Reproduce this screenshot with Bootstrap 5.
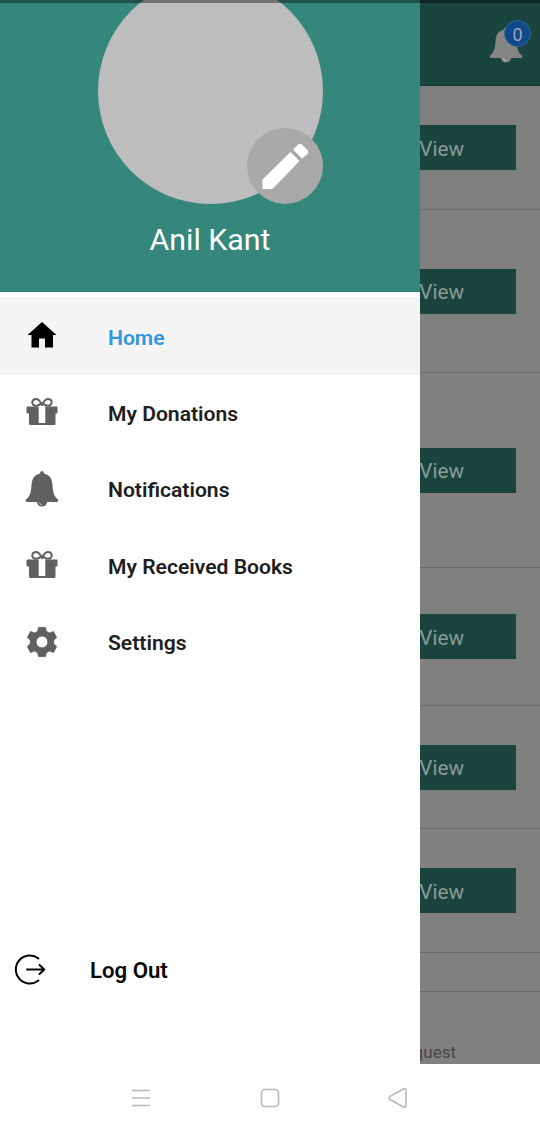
<!DOCTYPE html>
<html lang="en">
<head>
<meta charset="utf-8">
<meta name="viewport" content="width=device-width, initial-scale=1">
<title>Menu</title>
<link href="https://cdn.jsdelivr.net/npm/bootstrap@5.3.0/dist/css/bootstrap.min.css" rel="stylesheet">
<style>
body{font-family:Roboto,"Liberation Sans",sans-serif;height:1131px;background:#fefefe;overflow:hidden}
.status-strip{height:3px;background:rgba(0,0,0,.4);z-index:5}
.screen{height:1064px}
.drawer{width:420px;background:#fefefe}
.drawer-head{height:292px;background:#35877c;border-bottom:1px solid #2b776d;margin-bottom:5px}
.avatar{width:225px;height:226px;margin-top:-22px;background:#bdbdbd}
.edit{width:76px;height:76px;background:#a9a9a9;right:0;bottom:0}
.user-name{font-size:30.300px;line-height:36px;margin-top:18px}
.menu-item{height:76.500px;font-size:21.100px;font-weight:600;color:#1e1e1e}
.menu-item span{padding-top:1px}
.menu-item svg{width:36px;height:40px;margin:0 48px 2px 24px;fill:#606060;flex:none}
.menu-item.current{height:78px;background:#f4f4f4;color:#2f97dd}
.menu-item.current span{padding-top:3px}
.menu-item.current svg{fill:#000}
.logout{margin-top:auto;margin-bottom:73px;height:42px;font-size:22.200px;font-weight:600;color:#080808}
.logout span{margin-left:-6px;padding-top:2px}
.behind{background:#808080}
.topbar{height:86px;background:#1a443e;border-bottom:1px solid #153832}
.bell-box{right:15px;top:25px;width:38px;height:40px}
.count{width:27px;height:27px;right:-6px;top:-5px;background:#10498a;border:1px solid #32659a;color:#98a8b8;font-size:18px;padding-top:1px}
.request{border-bottom:1px solid #6b6b6b}
.view-btn{width:96px;height:45px;background:#1a443e;color:#8c9b98;font-size:20.700px;padding:4px 52px 0 0}
.tab-label{font-size:17px;line-height:20px;color:#474747;padding-right:84px;margin-bottom:2px}
.sysbar{height:67px}
.sysbar svg{fill:none;stroke:#b9b9b9;stroke-width:1.6}
</style>
</head>
<body class="position-relative">
<div class="status-strip position-absolute top-0 start-0 w-100"></div>
<div class="screen d-flex">
  <nav class="drawer d-flex flex-column flex-shrink-0">
    <header class="drawer-head d-flex flex-column align-items-center text-white overflow-hidden flex-shrink-0">
      <div class="avatar rounded-circle position-relative flex-shrink-0">
        <div class="edit rounded-circle position-absolute">
          <svg class="d-block" width="76" height="76" viewBox="0 0 76 76" fill="#fff"><path d="M15.500 51.500 43.500 24 52.500 33 25.500 61H15.500ZM46 21.500 51 16.500Q53 15 55 16.500L60.500 22Q62 24 60.500 26L55 30.500Z"/></svg>
        </div>
      </div>
      <div class="user-name">Anil Kant</div>
    </header>
    <div class="menu-item current d-flex align-items-center">
      <svg viewBox="0 0 36 40"><path d="M18 7 32.500 20H29V32.500H21V23.500H15V32.500H7.500V20H3.500Z"/></svg><span>Home</span>
    </div>
    <div class="menu-item d-flex align-items-center">
      <svg viewBox="0 0 36 40"><use href="#gift"/></svg><span>My Donations</span>
    </div>
    <div class="menu-item d-flex align-items-center">
      <svg viewBox="0 0 36 40"><use href="#bell"/></svg><span>Notifications</span>
    </div>
    <div class="menu-item d-flex align-items-center">
      <svg viewBox="0 0 36 40"><use href="#gift"/></svg><span>My Received Books</span>
    </div>
    <div class="menu-item d-flex align-items-center">
      <svg viewBox="0 0 36 40"><path fill-rule="evenodd" stroke="#606060" stroke-width=".8" stroke-linejoin="round" d="M14.500 5.400H21.500L22.300 9.200 25.500 11 29.500 9.500 32.600 15.500 29.700 18.200V21.800L32.600 24.500 29.500 30.500 25.500 29 22.300 30.800 21.500 34.600H14.500L13.700 30.800 10.500 29 6.500 30.500 3.400 24.500 6.300 21.800V18.200L3.400 15.500 6.500 9.500 10.500 11 13.700 9.200ZM18 14.100A5.900 5.900 0 1 0 18 25.900A5.900 5.900 0 1 0 18 14.100Z"/></svg><span>Settings</span>
    </div>
    <div class="logout d-flex align-items-center">
      <svg class="ms-2 me-5" width="40" height="42" viewBox="0 0 40 42" fill="none" stroke="#080808" stroke-width="2" stroke-linecap="round" stroke-linejoin="round"><path d="M30.500 9.500A14 14 0 1 0 30.500 31.500M19 20.500H36M31.500 16 36.300 20.500 31.500 25"/></svg><span>Log Out</span>
    </div>
  </nav>
  <main class="behind d-flex flex-column flex-grow-1 overflow-hidden">
    <header class="topbar position-relative flex-shrink-0">
      <div class="bell-box position-absolute">
        <svg width="38" height="40" viewBox="0 0 36 40" fill="#858585"><use href="#bell"/></svg>
        <span class="count rounded-circle position-absolute d-flex align-items-center justify-content-center">0</span>
      </div>
    </header>
    <div class="request d-flex align-items-center" style="height:124px"><div class="view-btn d-flex align-items-center justify-content-end">View</div></div>
    <div class="request d-flex align-items-center" style="height:163px"><div class="view-btn d-flex align-items-center justify-content-end">View</div></div>
    <div class="request d-flex align-items-center" style="height:195px"><div class="view-btn d-flex align-items-center justify-content-end">View</div></div>
    <div class="request d-flex align-items-center" style="height:138px"><div class="view-btn d-flex align-items-center justify-content-end">View</div></div>
    <div class="request d-flex align-items-center" style="height:123px"><div class="view-btn d-flex align-items-center justify-content-end">View</div></div>
    <div class="request d-flex align-items-center" style="height:124px"><div class="view-btn d-flex align-items-center justify-content-end">View</div></div>
    <div class="request" style="height:39px"></div>
    <div class="tab-label d-flex justify-content-end mt-auto">Request</div>
  </main>
</div>
<footer class="sysbar">
  <svg class="d-block" width="540" height="67" viewBox="0 0 540 67"><path d="M132 26.500H150M132 34H150M132 41.500H150M390 32.300Q388 34 390 35.500L403.500 43Q406 44 406 41.500V26.500Q406 24 403.500 25Z"/><rect x="261.500" y="25.500" width="17" height="17" rx="3.500"/></svg>
</footer>
<svg class="position-absolute" width="0" height="0">
  <defs>
    <g id="bell"><path d="M18 2Q20 2 20 4.500C26 6 28 10 28.500 16C29 24 30 27 34 30.500Q35 33 32.500 33H3.500Q1 33 2 30.500C6 27 7 24 7.500 16C8 10 10 6 16 4.500Q16 2 18 2ZM12.500 32H23.500Q22.500 37.500 18 37.500T12.500 32Z"/><path d="M15.300 33.500Q16 35.700 18 35.700" fill="none" stroke="#ddd" stroke-width="1" opacity=".8"/></g>
    <g id="gift"><path d="M4 14.500H32.500Q33.500 14.500 33.500 15.500V20.500Q33.500 21.500 32.500 21.500H31.500V31.500Q31.500 33 30 33H6.500Q5 33 5 31.500V21.500H4Q2.500 21.500 2.500 20.500V15.500Q2.500 14.500 4 14.500ZM14.700 14.500V31H21.300V14.500Z" fill-rule="evenodd"/><path d="M18 13.800C16.500 9 14.500 7 12 7C8.200 7 7.500 11 9 12.500C11 14.500 14.500 14.200 18 10.500M18 13.800C19.500 9 21.500 7 24 7C27.800 7 28.500 11 27 12.500C25 14.500 21.500 14.200 18 10.500" fill="none" stroke="#606060" stroke-width="2"/></g>
  </defs>
</svg>
<script src="https://cdn.jsdelivr.net/npm/bootstrap@5.3.0/dist/js/bootstrap.bundle.min.js"></script>
</body>
</html>
